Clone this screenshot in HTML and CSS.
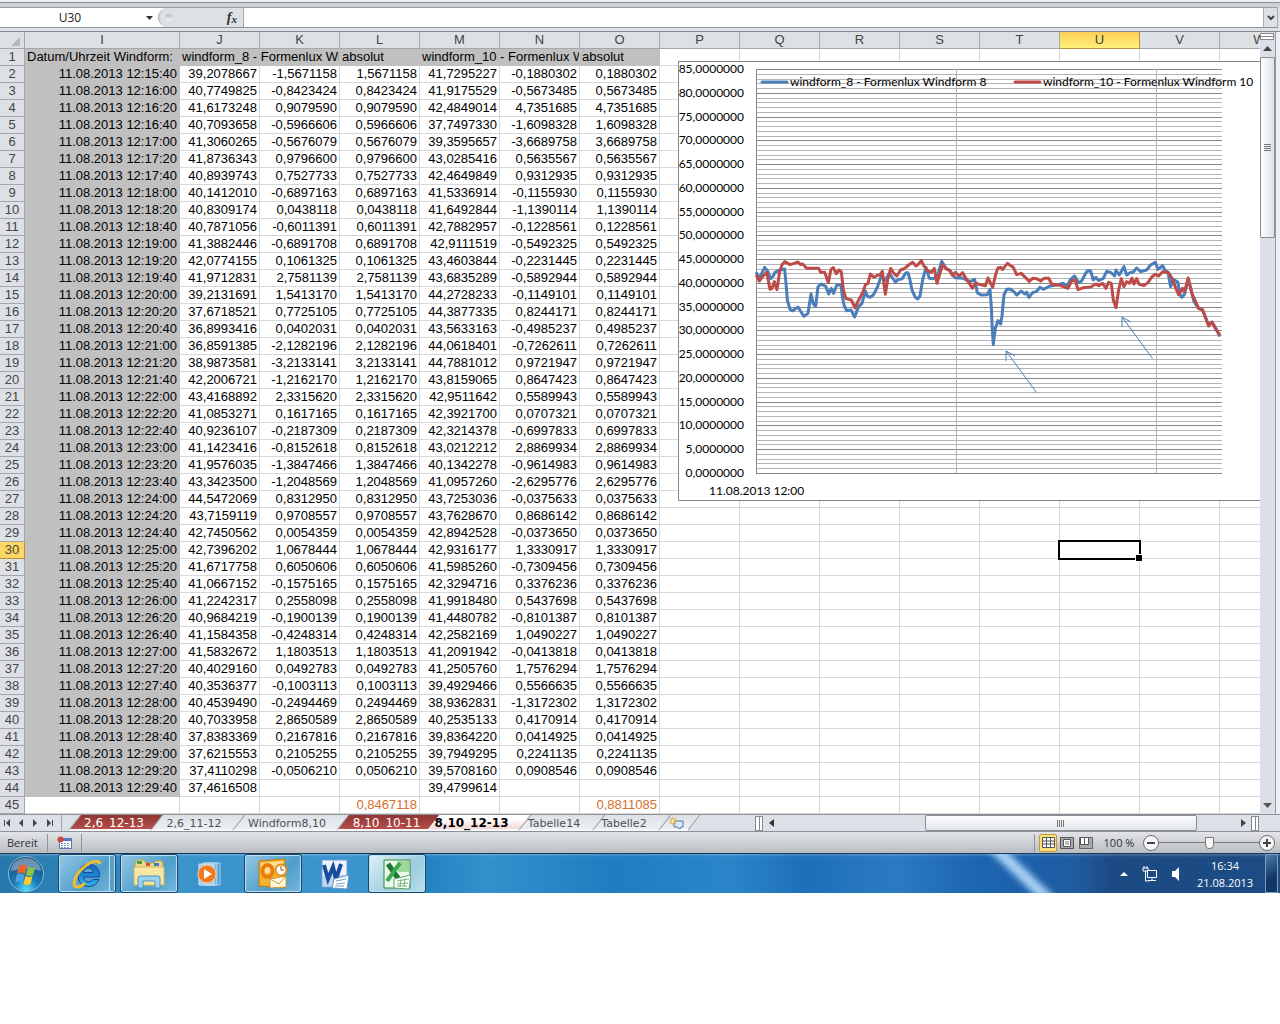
FILE: index.html
```html
<!DOCTYPE html>
<html lang="de">
<head>
<meta charset="utf-8">
<title>Tabelle 8,10_12-13</title>
<link rel="stylesheet" href="styles.css">
</head>
<body>
<div class="app">
  <div class="ribbon-edge"></div>
  <div class="formula-bar">
    <div class="name-box">
      <input class="name-input" aria-label="Namenfeld" value="U30">
      <button class="name-drop" aria-label="Namen anzeigen"><svg width="7" height="4"><path d="M0 0h7L3.500 4z" fill="#333"/></svg></button>
    </div>
    <div class="fx-area">
      <span class="fx-dot"></span>
      <button class="fx" aria-label="Funktion einfügen">f<span class="fx-x">x</span></button>
    </div>
    <input class="formula-input" aria-label="Bearbeitungsleiste">
    <button class="formula-expand" aria-label="Erweitern"><svg width="8" height="6"><path d="M1 1l3 3 3-3" fill="none" stroke="#444" stroke-width="2"/></svg></button>
  </div>

  <div class="work">
    <main class="sheet">
      <table class="grid">
        <colgroup id="cols"></colgroup>
        <thead><tr id="letters"></tr></thead>
        <tbody id="rows"></tbody>
      </table>
      <svg class="chart" width="640" height="440" viewBox="678 61 640 440" role="img" aria-label="Diagramm Windform 8 und Windform 10">
        <rect x="678.500" y="61.500" width="660" height="439" fill="#fff" stroke="#868686"/>
        <g id="gridlines"></g>
        <g class="axis" id="axis"></g>
        <text class="axis-label" x="709" y="495">11.08.2013 12:00</text>
        <g class="series" transform="translate(740 240) scale(.3333)">
          <polyline stroke="#4a7ebb" points="50,100 58,115 74,82 84,95 92,116 100,108 104,98 118,90 134,87 138,130 142,180 150,208 158,212 174,201 182,214 192,229 204,220 213,162 220,192 227,199 234,140 244,132 258,140 266,162 274,145 281,160 290,136 303,134 307,170 312,195 320,212 333,210 344,231 356,200 366,190 376,153 382,168 390,172 400,165 412,142 424,108 436,120 448,100 466,126 476,118 486,117 498,98 504,98 510,120 516,150 526,172 533,177 540,168 548,120 558,82 568,115 580,116 592,110 605,64 618,85 630,92 645,113 670,115 690,125 704,118 712,158 724,165 742,164 750,148 754,200 757,270 760,314 766,265 774,242 782,252 786,228 792,165 800,148 810,147 822,155 830,165 844,153 854,162 860,156 867,172 878,158 890,154 900,142 910,148 930,138 950,135 970,130 980,140 992,118 1004,108 1016,128 1026,122 1038,98 1044,92 1052,93 1060,120 1068,112 1076,122 1090,115 1100,94 1112,97 1124,108 1128,90 1138,105 1152,80 1160,105 1170,98 1180,96 1190,84 1202,95 1220,90 1232,75 1246,67 1254,88 1268,77 1276,92 1284,96 1292,140 1300,118 1314,127 1320,165 1326,172 1334,162 1344,118 1352,145 1362,185 1376,205 1388,210 1406,255 1416,246 1426,262 1438,286"/>
          <polyline stroke="#be4b48" points="50,108 58,123 66,112 80,97 90,148 96,145 103,125 111,149 118,100 126,74 134,65 150,74 162,70 174,66 182,74 188,72 200,85 236,85 242,97 254,97 265,128 273,88 280,83 289,101 297,90 304,95 310,150 318,176 334,180 345,204 356,180 368,158 376,135 384,130 391,102 402,112 412,106 420,105 427,94 436,163 444,115 452,85 460,98 470,108 482,90 494,85 506,75 518,67 528,78 536,72 544,62 552,78 562,92 574,97 583,85 591,130 600,100 608,74 620,88 628,90 638,107 646,97 658,108 668,98 678,115 688,130 697,145 706,130 718,133 736,137 744,114 758,142 768,100 774,84 782,82 788,88 802,70 812,77 820,82 830,104 844,100 868,124 878,115 890,116 902,123 912,115 926,115 936,133 960,136 984,145 996,122 1006,120 1014,149 1030,143 1052,141 1068,132 1076,137 1088,130 1098,145 1106,127 1114,130 1120,180 1128,203 1136,150 1144,116 1152,140 1160,125 1168,130 1176,115 1182,132 1190,116 1198,133 1212,137 1224,128 1236,110 1246,103 1256,108 1268,95 1286,98 1296,115 1308,145 1316,164 1328,145 1334,154 1345,114 1356,160 1376,205 1388,210 1406,258 1416,246 1426,265 1438,282"/>
        </g>
        <g fill="none" stroke="#4a7ebb">
          <path d="M1036.500 392.500L1006 351M1006 361v-10l9 5"/>
          <path d="M1152.500 358.500L1122 317M1122 327v-10l9 5"/>
        </g>
        <g stroke-width="3" stroke-linecap="round"><path d="M762 82h25" stroke="#4a7ebb"/><path d="M1015 82h25" stroke="#be4b48"/></g>
        <text class="legend" x="790" y="86">windform_8 - Formenlux Windform 8</text>
        <text class="legend" x="1043" y="86">windform_10 - Formenlux Windform 10</text>
      </svg>
      <div class="selection"></div>
    </main>
    <div class="vscroll">
      <span class="split-h"></span>
      <button class="arrow" aria-label="Nach oben"><svg width="9" height="5"><path d="M0 5h9L4.500 0z" fill="#444"/></svg></button>
      <div class="v-track"><div class="v-thumb"><i class="v-grip"></i></div></div>
      <button class="arrow" aria-label="Nach unten"><svg width="9" height="5"><path d="M0 0h9L4.500 5z" fill="#555"/></svg></button>
    </div>
  </div>

  <div class="tab-bar">
    <div class="tab-nav">
      <button aria-label="Erstes Blatt"><svg width="7" height="8"><path d="M0 1h1v6H0zM6 0v8L2 4z" fill="#3c4654"/></svg></button>
      <button aria-label="Voriges Blatt"><svg width="7" height="8"><path d="M5 0v8L1 4z" fill="#3c4654"/></svg></button>
      <button aria-label="Nächstes Blatt"><svg width="7" height="8"><path d="M1 0v8l4-4z" fill="#3c4654"/></svg></button>
      <button aria-label="Letztes Blatt"><svg width="7" height="8"><path d="M6 1h1v6H6zM1 0v8l4-4z" fill="#3c4654"/></svg></button>
    </div>
    <nav class="tabs">
      <button class="tab w-m red">2,6_12-13</button>
      <button class="tab w-m">2,6_11-12</button>
      <button class="tab w-xl">Windform8,10</button>
      <button class="tab w-l red">8,10_10-11</button>
      <button class="tab w-l current">8,10_12-13</button>
      <button class="tab w-s">Tabelle14</button>
      <button class="tab w-xs">Tabelle2</button>
      <button class="tab w-new" aria-label="Neues Blatt"><svg width="15" height="13"><path d="M5 4h9v6h-2l-1 2-3-2H5z" fill="#dce8f8" stroke="#5874a8"/><path d="M4 0v8M0 4h8M1 1l6 6M7 1L1 7" stroke="#e69a20"/><circle cx="4" cy="4" r="1.500" fill="#fff1b8"/></svg></button>
    </nav>
    <div class="hscroll">
      <span class="split-v"></span>
      <button class="arrow-h" aria-label="Nach links"><svg width="5" height="8"><path d="M5 0v8L0 4z" fill="#333"/></svg></button>
      <div class="h-track"><div class="h-thumb"><i class="h-grip"></i></div></div>
      <button class="arrow-h" aria-label="Nach rechts"><svg width="5" height="8"><path d="M0 0v8l5-4z" fill="#444"/></svg></button>
      <span class="split-v"></span>
    </div>
  </div>

  <footer class="status">
    <span class="ready">Bereit</span>
    <button class="macro" aria-label="Makro aufzeichnen"><svg width="16" height="14"><path d="M2.500 2.500h12v10h-12z" fill="#fff" stroke="#5a78b0"/><path d="M3 3h11v2H3z" fill="#4d79c7"/><path d="M4 7.500h9M4 9.500h9M4 11.500h9" stroke="#7c94c4" stroke-dasharray="2 1"/><circle cx="3.500" cy="3.500" r="3" fill="#c94a3c"/></svg></button>
    <div class="views">
      <button class="view on" aria-label="Normal"><svg width="13" height="11"><path d="M.5.500h12v10H.5zM.5 4h12M.5 7h12M4.500.500v10M8.500.500v10" fill="#fff" stroke="#555"/></svg></button>
      <button class="view" aria-label="Seitenlayout"><svg width="14" height="12"><path d="M.5.500h13v11H.5z" fill="#aaa" stroke="#555"/><path d="M3.500 2.500h7v7h-7z" fill="#fff" stroke="#555"/><path d="M5 5h4M5 7h4" stroke="#777"/></svg></button>
      <button class="view" aria-label="Umbruchvorschau"><svg width="14" height="12"><path d="M.5.500h13v11H.5z" fill="#aaa" stroke="#666"/><path d="M1.500.500h4v7h-4zM5.500.500h4v7h-4z" fill="#fff" stroke="#555"/></svg></button>
    </div>
    <label class="zoom-label" for="zoom">100 %</label>
    <button class="zoom-btn" aria-label="Verkleinern"><svg width="16" height="16"><circle cx="8" cy="8" r="7.500" fill="#f6f6f6" stroke="#6b6e73"/><path d="M4 8h8" stroke="#444" stroke-width="2"/></svg></button>
    <input class="zoom" id="zoom" type="range" min="0" max="200" value="100">
    <button class="zoom-btn" aria-label="Vergrößern"><svg width="16" height="16"><circle cx="8" cy="8" r="7.500" fill="#f6f6f6" stroke="#6b6e73"/><path d="M4 8h8M8 4v8" stroke="#444" stroke-width="2"/></svg></button>
  </footer>
</div>

<div class="taskbar">
  <button class="start" aria-label="Start"><svg width="38" height="38" viewBox="0 0 38 38">
    <defs><radialGradient id="orb" cx=".5" cy=".95" r=".9"><stop offset="0" stop-color="#58e0ff"/><stop offset=".4" stop-color="#1a7cb8"/><stop offset="1" stop-color="#1d4f7c"/></radialGradient></defs>
    <circle cx="19" cy="19" r="17.500" fill="url(#orb)" stroke="#86bede"/><path d="M4 16a15 13 0 0 1 30 0q-15-5-30 0z" fill="#fff" opacity=".35"/>
    <path d="M12 11q4-3 8 0l-2 8q-4-3-8 0z" fill="#e8642c"/><path d="M21 12q4 2 7 0l-2 8q-4 2-7 0z" fill="#8cc63e"/><path d="M9.500 20q4-3 8 0l-2 8q-4-3-7 0z" fill="#4aa0e4"/><path d="M18.500 21q4 2 7 0l-2 8q-3 2-7 0z" fill="#fcc92e"/></svg></button>
  <button class="task open stack" aria-label="Internet Explorer"><svg width="34" height="34" viewBox="0 0 34 34">
    <defs><linearGradient id="ie" x2="0" y2="1"><stop offset="0" stop-color="#1466b8"/><stop offset=".5" stop-color="#1f86d4"/><stop offset="1" stop-color="#35b6f0"/></linearGradient></defs>
    <path d="M29.500 20H13.500q1 5 5 5 3 0 4.500-2.500h6q-3 7-11 7-10-1-10-11 1-11 11-11.500 11 1 10.500 13zM13.500 15.500h9.500q-.5-4.500-4.500-4.500-4 0-5 4.500z" fill="url(#ie)" stroke="#0f4a94"/>
    <path d="M30 7q-1-5-10-1Q9 12 5 22q-3 9 4 8 3-1 6-4" fill="none" stroke="#f2bb32" stroke-width="3"/></svg></button>
  <button class="task open" aria-label="Explorer"><svg width="34" height="34" viewBox="0 0 34 34">
    <path d="M3 6l2-3h7l2 3h8l2-2h6l1 4v20H3z" fill="#edd68a" stroke="#c8a64c"/><path d="M5 4h5v3H5z" fill="#3da052"/><path d="M14 6h4v3h-4z" fill="#d5503a"/><path d="M22 6h5v3h-5z" fill="#3d7cc8"/><path d="M2 10h30v18H2z" fill="#f8e7a4" stroke="#d4b55e"/>
    <path d="M6 31V21q0-2 2-2h18q2 0 2 2v10h-5v-7H11v7z" fill="#9bd2ee" stroke="#4c94c4"/></svg></button>
  <button class="task" aria-label="Media Player"><svg width="30" height="34" viewBox="0 0 30 34"><path d="M10 6h14v22H10z" fill="#4d9ad0" stroke="#a8d0ea"/><path d="M7 6h14v22H7z" fill="#79b6de" stroke="#b8dcf0"/><path d="M3 7h15v21H3z" fill="#a8cfe8" stroke="#c8e4f4"/><circle cx="11" cy="17" r="9" fill="#ef7a20" stroke="#fbd0a4"/><path d="M8 12l8 5-8 5z" fill="#fff"/></svg></button>
  <button class="task open" aria-label="Outlook"><svg width="34" height="34" viewBox="0 0 34 34"><path d="M3 4l26-2v29L3 29z" fill="#f6b22c" stroke="#b97a10"/><path d="M5 6l22-2v10L5 17z" fill="#fde098"/><ellipse cx="11.500" cy="14" rx="5" ry="6" fill="none" stroke="#e87c0c" stroke-width="4"/><path d="M14 22l16-3v11l-16 1z" fill="#fff8e0" stroke="#c99938"/><path d="M14 22l9 5 7-8" fill="none" stroke="#c99938"/><circle cx="25" cy="13" r="5.500" fill="#fff" stroke="#e09020" stroke-width="2"/><path d="M25 9v4h3" fill="none" stroke="#885010"/></svg></button>
  <button class="task" aria-label="Word"><svg width="34" height="34" viewBox="0 0 34 34"><path d="M4 3h25v27H4z" fill="#eef4fc" stroke="#6d9bd0"/><path d="M5 18h23v11H5z" fill="#bcd5f0"/><path d="M6 8l4 14 5-12 3 12 5-15" fill="none" stroke="#1b4c9c" stroke-width="4"/><path d="M16 22l15-4-2 14-15-1z" fill="#fff" stroke="#6c94c4"/><path d="M18 24l10-2M18 27l9-1M17 29l9 0" stroke="#7ca0cc"/></svg></button>
  <button class="task open active" aria-label="Excel"><svg width="34" height="34" viewBox="0 0 34 34"><path d="M4 3h26v28H4z" fill="#eaf7ea" stroke="#2a8a3c"/><path d="M18 4h11v11H18z" fill="#9ed69c"/><path d="M8 7l12 17" stroke="#187830" stroke-width="5"/><path d="M20 6L7 24" stroke="#3ea84c" stroke-width="4"/><path d="M14 22l17-4-2 14-15-1z" fill="#fff" stroke="#5fa866"/><path d="M17 24l12-2M17 27l11-1M17 29l10 0M21 22l-1 8M25 21l-1 9" stroke="#75b87a"/></svg></button>
  <div class="tray">
    <button class="tray-btn" aria-label="Ausgeblendete Symbole"><svg width="8" height="4"><path d="M0 4h8L4 0z" fill="#fff"/></svg></button>
    <button class="tray-btn" aria-label="Netzwerk"><svg width="16" height="16" viewBox="0 0 16 16"><path d="M5.500 4.500h9v7h-9zM6 14.500h8M10 12v2" fill="#1d4a80" stroke="#fff"/><path d="M1 2h5v3H1zM2 0v2M5 0v2M3.500 5v10h3" fill="none" stroke="#fff"/></svg></button>
    <button class="tray-btn" aria-label="Lautstärke"><svg width="8" height="14"><path d="M0 4h3l4-4v14l-4-4H0z" fill="#fff"/></svg></button>
    <div class="clock"><time>16:34</time><time>21.08.2013</time></div>
  </div>
  <button class="show-desktop" aria-label="Desktop anzeigen"></button>
</div>
<script src="script.js"></script>
</body>
</html>
```

FILE: styles.css
```css
* { box-sizing: border-box; }
body { margin: 0; background: #fff; font-family: "Open Sans", sans-serif; font-size: 12px; }
button { border: 0; padding: 0; margin: 0; background: none; color: inherit; font: inherit; display: flex; align-items: center; justify-content: center; }
input { margin: 0; border: 0; padding: 0; font: inherit; }
svg { display: block; flex: none; }

.app { background: #dfe3e8; }
.ribbon-edge { height: 7px; background: #dce0e5; border-top: 2px solid #edf1f6; border-bottom: 4px solid #cdd2d8; box-shadow: inset 0 -1px #8b9097; }

.formula-bar { display: flex; height: 21px; margin-right: 2px; border-top: 1px solid #9a9da2; border-bottom: 1px solid #8f9399; background: #fff; }
.name-box { display: flex; width: 158px; }
.name-input { width: 140px; text-align: center; color: #222; background: transparent; }
.name-drop { width: 18px; }
.fx-area { display: flex; align-items: center; justify-content: space-between; width: 86px; padding: 0 6px; background: #dde1e6; border: 1px solid #a4a8ad; border-width: 0 1px; border-radius: 10px 0 0 10px; }
.fx-dot { width: 8px; height: 7px; border-radius: 4px; background: linear-gradient(#b8bcc2, #f4f5f7); }
.fx { font: italic bold 14px "Liberation Serif", serif; color: #333; }
.fx-x { font-size: 11px; padding-top: 3px; }
.formula-input { flex: 1; min-width: 0; }
.formula-expand { width: 15px; background: #dde1e6; border: 1px solid #a9adb3; border-width: 0 1px; }

.work { display: flex; margin-top: 3px; border-top: 1px solid #85898f; }
.sheet { position: relative; flex: 1; min-width: 0; overflow: hidden; background: #fff; }
.grid { width: 1300px; border-collapse: separate; border-spacing: 0; table-layout: fixed; font: 13px/16px "Liberation Sans", Arial, sans-serif; color: #000; }
.col-head { width: 25px; }
.col-date { width: 155px; }
.col { width: 80px; }
.grid th, .grid td { height: 17px; padding: 0 2px; border: solid #d6d8da; border-width: 0 1px 1px 0; white-space: nowrap; overflow: hidden; text-align: right; font-weight: normal; line-height: 16px; }
.grid thead th { background: #dde1e6; border-color: #a3a7ac; color: #444; text-align: center; }
.grid tbody th { background: #dde1e6; border-color: #a3a7ac; color: #444; text-align: center; padding: 0; }
.grid thead .lit { background: linear-gradient(#fdcf56, #fff07a); border-color: #b98f3c; }
.grid tbody .lit { background: #fdd663; border-color: #b98f3c; }
.grid .grey { background: #c0c0c0; border-color: #c0c0c0; }
.grid .left { text-align: left; }
.grid .sum { color: #d2702c; }

.chart { position: absolute; left: 678px; top: 29px; }
.axis-label, .legend, .axis text { font: 12px Lato, sans-serif; fill: #000; }
.axis text { text-anchor: end; }
.series { fill: none; stroke-width: 9; stroke-linejoin: round; stroke-linecap: round; }
.selection { position: absolute; left: 1058px; top: 508px; width: 83px; height: 20px; border: 2px solid #000; }
.selection::after { content: ""; position: absolute; right: -3px; bottom: -3px; width: 6px; height: 6px; background: #000; border: solid #fff; border-width: 1px 0 0 1px; }

.vscroll { display: flex; flex-direction: column; width: 20px; padding-right: 4px; background: #dbe0e8; box-shadow: inset -4px 0 #edf0f3, inset -5px 0 #94989e; }
.split-h { width: 14px; height: 7px; margin-top: 1px; border: 1px solid #888; background: linear-gradient(#fff 2px, #888 2px, #888 3px, #fff 3px); }
.vscroll .arrow { width: 14px; height: 17px; }
.v-track { flex: 1; }
.v-thumb { display: flex; align-items: center; justify-content: center; width: 15px; height: 181px; border: 1px solid #888d94; border-radius: 1px; background: linear-gradient(90deg, #fbfcfd, #dfe3e9); }
.v-grip { width: 7px; height: 8px; background: repeating-linear-gradient(#777 0 1px, transparent 1px 2px); }

.tab-bar { display: flex; height: 18px; padding-right: 21px; border-top: 1px solid #8f9399; border-bottom: 1px solid #8f9399; background: #dce0e7; }
.tab-nav { display: flex; gap: 7px; width: 62px; padding-left: 4px; border-right: 1px solid #a3a7ac; }
.tabs { display: flex; flex: 1; min-width: 0; padding-left: 12px; font: 11px "DejaVu Sans", sans-serif; color: #4c5259; }
.tab { position: relative; z-index: 0; height: 16px; padding-right: 6px; }
.tab::before { content: ""; position: absolute; z-index: -1; inset: 0; transform: skewX(-38deg); background: linear-gradient(#dde1e6, #eceff2); border-left: 1px solid #8b9097; border-bottom: 2px solid #f8f9fa; }
.w-xl { width: 104px; }
.w-l { width: 91px; }
.w-m { width: 82px; }
.w-s { width: 74px; }
.w-xs { width: 66px; }
.w-s, .w-xs, .current { padding-right: 14px; }
.w-new { width: 30px; }
.w-new::before { border-right: 1px solid #8b9097; }
.red { color: #fff; font-size: 12px; padding-right: 2px; }
.red::before { background: linear-gradient(#8f3533, #b54f4c); }
.current { color: #000; font-size: 12px; font-weight: bold; }
.current::before { background: linear-gradient(#fff 30%, #f2d5d4); border-left-color: #fff; }
.hscroll { display: flex; align-items: center; width: 504px; }
.split-v { width: 8px; height: 15px; border: 1px solid #888; background: linear-gradient(90deg, #fff 3px, #888 3px, #888 4px, #fff 4px); }
.arrow-h { width: 16px; height: 16px; }
.h-track { flex: 1; display: flex; justify-content: flex-end; padding-right: 38px; }
.h-thumb { display: flex; align-items: center; justify-content: center; width: 272px; height: 16px; border: 1px solid #888d94; border-radius: 2px; background: linear-gradient(#fbfcfd, #e2e6eb); }
.h-grip { width: 8px; height: 7px; background: repeating-linear-gradient(90deg, #777 0 1px, transparent 1px 2px); }

.status { display: flex; align-items: center; height: 21px; padding: 0 5px 0 7px; background: linear-gradient(#e2e4e7, #b9bdc2); font-size: 11px; color: #333; }
.ready { width: 40px; }
.macro { width: 35px; height: 18px; border: solid #8f949a; border-width: 0 1px; }
.views { display: flex; align-items: center; gap: 1px; margin-left: auto; padding-left: 4px; border-left: 1px solid #8f949a; }
.view { width: 18px; height: 18px; }
.view.on { border: 1px solid #c29a38; border-radius: 2px; background: #fde07c; }
.zoom-label { width: 48px; text-align: center; }
.zoom { appearance: none; flex: none; width: 100px; height: 16px; background: linear-gradient(#777, #777) center / 100% 1px no-repeat; }
.zoom::-webkit-slider-thumb { appearance: none; width: 9px; height: 12px; border: 1px solid #777; border-radius: 1px 1px 5px 5px; background: #f6f6f6; }

.taskbar { position: relative; overflow: hidden; display: flex; align-items: center; height: 40px; border-top: 1px solid #17395e; color: #fff;
  background: linear-gradient(#ffffff38, transparent 3px),
    linear-gradient(90deg, #2778aa, #3a93cb 14%, #3b95cc 30%, #2481c0 33%, #3191cc 38%, #1f7dc0 48%, #2a86c8 57%, #1d6fb8 63%, #2b7bc2 70%, #1d66b0 76%, #1c60ac 80%, #205c9e 84%, #1c4a83 87%, #1d4c84); }
.start { width: 52px; height: 39px; }
.task { width: 58px; height: 39px; margin-right: 4px; }
.start + .task { margin-left: 6px; }
.open { border: 1px solid #14476f; border-radius: 3px; background: linear-gradient(135deg, #94c8e4, #4f9ecb 60%, #76b8dc); box-shadow: inset 0 0 0 1px #c0e0f0; }
.stack { box-shadow: inset 0 0 0 1px #c0e0f0, inset -5px 0 #5d9ec4, inset -6px 0 #bfe0f0; }
.active { background: linear-gradient(135deg, #e0f0f6, #9cccdf 60%, #b8dfec); }
.tray { display: flex; align-items: center; gap: 12px; height: 39px; margin-left: auto; padding-right: 9px; }
.tray-btn { min-width: 12px; height: 30px; }
.clock { display: flex; flex-direction: column; align-items: center; width: 62px; font-size: 11px; line-height: 17px; }
.show-desktop { width: 13px; height: 39px; margin-right: 2px; border: 1px solid #7d9dc0; background: linear-gradient(150deg, #4f7aa8, #12386a 60%); }
.tray::before { content: ""; position: absolute; right: 252px; top: -30px; width: 12px; height: 100px; background: #a6d0f4; filter: blur(3px); transform: rotate(-46deg); }
```

FILE: script.js
```js
// Messwerte ab Zeile 2: Spalte J, K, M, N (L und O sind die Beträge von K und N)
const data = `39,2078667 -1,5671158 41,7295227 -0,1880302
40,7749825 -0,8423424 41,9175529 -0,5673485
41,6173248 0,9079590 42,4849014 4,7351685
40,7093658 -0,5966606 37,7497330 -1,6098328
41,3060265 -0,5676079 39,3595657 -3,6689758
41,8736343 0,9796600 43,0285416 0,5635567
40,8939743 0,7527733 42,4649849 0,9312935
40,1412010 -0,6897163 41,5336914 -0,1155930
40,8309174 0,0438118 41,6492844 -1,1390114
40,7871056 -0,6011391 42,7882957 -0,1228561
41,3882446 -0,6891708 42,9111519 -0,5492325
42,0774155 0,1061325 43,4603844 -0,2231445
41,9712831 2,7581139 43,6835289 -0,5892944
39,2131691 1,5413170 44,2728233 -0,1149101
37,6718521 0,7725105 44,3877335 0,8244171
36,8993416 0,0402031 43,5633163 -0,4985237
36,8591385 -2,1282196 44,0618401 -0,7262611
38,9873581 -3,2133141 44,7881012 0,9721947
42,2006721 -1,2162170 43,8159065 0,8647423
43,4168892 2,3315620 42,9511642 0,5589943
41,0853271 0,1617165 42,3921700 0,0707321
40,9236107 -0,2187309 42,3214378 -0,6997833
41,1423416 -0,8152618 43,0212212 2,8869934
41,9576035 -1,3847466 40,1342278 -0,9614983
43,3423500 -1,2048569 41,0957260 -2,6295776
44,5472069 0,8312950 43,7253036 -0,0375633
43,7159119 0,9708557 43,7628670 0,8686142
42,7450562 0,0054359 42,8942528 -0,0373650
42,7396202 1,0678444 42,9316177 1,3330917
41,6717758 0,6050606 41,5985260 -0,7309456
41,0667152 -0,1575165 42,3294716 0,3376236
41,2242317 0,2558098 41,9918480 0,5437698
40,9684219 -0,1900139 41,4480782 -0,8101387
41,1584358 -0,4248314 42,2582169 1,0490227
41,5832672 1,1803513 41,2091942 -0,0413818
40,4029160 0,0492783 41,2505760 1,7576294
40,3536377 -0,1003113 39,4929466 0,5566635
40,4539490 -0,2494469 38,9362831 -1,3172302
40,7033958 2,8650589 40,2535133 0,4170914
37,8383369 0,2167816 39,8364220 0,0414925
37,6215553 0,2105255 39,7949295 0,2241135
37,4110298 -0,0506210 39,5708160 0,0908546
37,4616508 - 39,4799614 -`.split("\n").map(line => line.split(" "));

const letters = [..."IJKLMNOPQRSTUVW"];
const abs = v => v.replace("-", "");
const two = n => String(n).padStart(2, "0");

document.getElementById("cols").innerHTML =
  '<col class="col-head"><col class="col-date">' + '<col class="col">'.repeat(letters.length - 1);
document.getElementById("letters").innerHTML =
  '<th><svg width="20" height="14"><path d="M18 4v9H9z" fill="#b4b8bd"/></svg></th>' +
  letters.map(l => `<th scope="col"${l === "U" ? ' class="lit"' : ""}>${l}</th>`).join("");

const blank = n => "<td></td>".repeat(n);
const rest = letters.length - 7;
let html = `<tr><th scope="row">1</th><td class="grey left">Datum/Uhrzeit Windform:</td>
  <td class="grey left" colspan="2">windform_8 - Formenlux Windform 8</td><td class="grey left">absolut</td>
  <td class="grey left" colspan="2">windform_10 - Formenlux Windform 10</td><td class="grey left">absolut</td>${blank(rest)}</tr>`;

data.forEach(([j, k, m, n], i) => {
  const sec = 15 * 60 + 40 + i * 20;
  const time = `12:${two(Math.floor(sec / 60))}:${two(sec % 60)}`;
  if (k === "-") { k = n = ""; }
  const cells = [j, k, abs(k), m, n, abs(n)].map(v => `<td>${v}</td>`).join("");
  const row = i + 2;
  html += `<tr><th scope="row"${row === 30 ? ' class="lit"' : ""}>${row}</th><td class="grey">11.08.2013 ${time}</td>${cells}${blank(rest)}</tr>`;
});
html += `<tr><th scope="row">45</th>${blank(3)}<td class="sum">0,8467118</td>${blank(2)}<td class="sum">0,8811085</td>${blank(rest)}</tr>`;
document.getElementById("rows").innerHTML = html;

// Gitternetz und Größenachse des Diagramms
const left = 756, right = 1222, top0 = 69, bottom = 473;
const yOf = v => Math.round(bottom - v * (bottom - top0) / 85) + 0.5;
let lines = "", labels = "";
for (let v = 0; v <= 85; v++) {
  lines += `<path d="M${left} ${yOf(v)}H${right}" stroke="${v % 5 ? "#b3b3b3" : "#868686"}"/>`;
  if (v % 5 === 0) labels += `<text x="744" y="${yOf(v) + 3.5}">${v},0000000</text>`;
}
lines += `<path d="M${left + 0.5} ${top0}V${bottom}" stroke="#868686"/>`;
[956.5, 1156.5].forEach(x => { lines += `<path d="M${x} ${top0}V${bottom}" stroke="#b3b3b3"/>`; });
document.getElementById("gridlines").innerHTML = lines;
document.getElementById("axis").innerHTML = labels;
```
